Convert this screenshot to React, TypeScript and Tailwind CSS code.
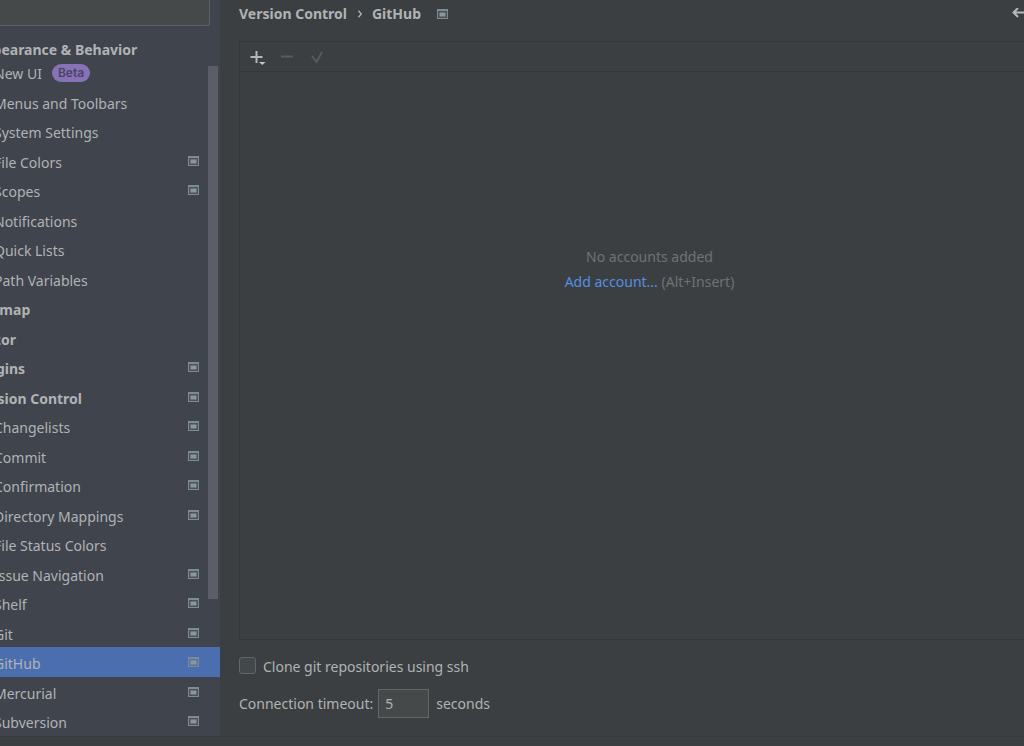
import React from "react";
import clsx from "clsx";

interface SettingsItem {
  label: string;
  level: "group" | "page";
  projectScoped?: boolean;
  badge?: string;
  selected?: boolean;
}

const items: SettingsItem[] = [
  { label: "New UI", level: "page", badge: "Beta" },
  { label: "Menus and Toolbars", level: "page" },
  { label: "System Settings", level: "page" },
  { label: "File Colors", level: "page", projectScoped: true },
  { label: "Scopes", level: "page", projectScoped: true },
  { label: "Notifications", level: "page" },
  { label: "Quick Lists", level: "page" },
  { label: "Path Variables", level: "page" },
  { label: "Keymap", level: "group" },
  { label: "Editor", level: "group" },
  { label: "Plugins", level: "group", projectScoped: true },
  { label: "Version Control", level: "group", projectScoped: true },
  { label: "Changelists", level: "page", projectScoped: true },
  { label: "Commit", level: "page", projectScoped: true },
  { label: "Confirmation", level: "page", projectScoped: true },
  { label: "Directory Mappings", level: "page", projectScoped: true },
  { label: "File Status Colors", level: "page" },
  { label: "Issue Navigation", level: "page", projectScoped: true },
  { label: "Shelf", level: "page", projectScoped: true },
  { label: "Git", level: "page", projectScoped: true },
  { label: "GitHub", level: "page", projectScoped: true, selected: true },
  { label: "Mercurial", level: "page", projectScoped: true },
  { label: "Subversion", level: "page", projectScoped: true },
];

const ProjectIcon: React.FC<{ className?: string }> = ({ className = "" }) => (
  <svg
    viewBox="0 0 11 10"
    className={clsx("h-[10px] w-[11px] shrink-0", className)}
    aria-hidden="true"
  >
    <path fillRule="evenodd" d="M0 0h11v10H0z M1 2v7h9V2z" fill="#7f8b93" />
    <rect x="1" y="2" width="9" height="7" fill="#7f8b93" fillOpacity="0.2" />
    <rect x="2.500" y="3.500" width="6" height="4" fill="#8b979f" />
  </svg>
);

const Sidebar: React.FC = () => (
  <aside className="relative flex w-[220px] shrink-0 flex-col overflow-hidden bg-[#40444c]">
    <input
      type="search"
      aria-label="Search settings"
      className="-ml-6 mr-[10px] h-[26px] rounded-b-[3px] border border-t-0 border-[#5c6062] bg-[#45494a] px-2 outline-none"
    />
    <nav className="pt-[15px]">
      <button
        type="button"
        className="-ml-[26px] flex h-4 items-center whitespace-nowrap font-bold leading-5"
      >
        <span className="pt-[2px]">Appearance &amp; Behavior</span>
      </button>
      <ul>
        {items.map((item) => (
          <li key={item.label} className="h-[29px] odd:h-[30px]">
            <button
              type="button"
              aria-current={item.selected ? "page" : undefined}
              className={clsx(
                "flex h-full w-full items-center pr-[21px] text-left",
                item.selected && "bg-[#4b6eaf]",
              )}
            >
              <span
                className={clsx(
                  "whitespace-nowrap pt-1 leading-5",
                  item.level === "group" ? "-ml-[26px] font-bold" : "-ml-[6px]",
                )}
              >
                {item.label}
              </span>
              {item.badge && (
                <span className="ml-[10px] mt-[2px] rounded-full bg-[#8672b5] px-[6px] font-['Inter','Liberation_Sans',sans-serif] text-xs font-semibold leading-[18px] text-[#4b4268]">
                  {item.badge}
                </span>
              )}
              {item.projectScoped && <ProjectIcon className="ml-auto" />}
            </button>
          </li>
        ))}
      </ul>
    </nav>
    <div className="absolute right-[2px] top-[66px] h-[533px] w-[10px] bg-[#5b5e66]" />
  </aside>
);

const Breadcrumb: React.FC = () => (
  <header className="flex h-7 items-center justify-between">
    <div className="flex items-center font-bold leading-5">
      <a href="#version-control">Version Control</a>
      <svg viewBox="0 0 6 8" className="ml-[10px] mr-[9px] h-2 w-[6px]" aria-hidden="true">
        <path d="M1.500 .8 4.300 4 1.500 7.200" fill="none" stroke="currentColor" strokeWidth="1.3" />
      </svg>
      <span>GitHub</span>
      <ProjectIcon className="ml-4" />
    </div>
    <button type="button" aria-label="Back" className="-mr-1">
      <svg viewBox="0 0 16 12" className="h-3 w-4" aria-hidden="true">
        <path
          d="M6 0 1.500 4.500 6 9M1.500 4.500H16"
          fill="none"
          stroke="#b4b7b9"
          strokeWidth="2"
        />
      </svg>
    </button>
  </header>
);

const Toolbar: React.FC = () => (
  <div className="flex h-[30px] items-center gap-[14px] border-b border-[#343638] pl-[9px]">
    <button type="button" aria-label="Add account">
      <svg viewBox="0 0 17 16" className="h-4 w-[17px]" aria-hidden="true">
        <path d="M7.500 2v12M1.500 8h12" stroke="#b4b7b9" strokeWidth="2" />
        <path d="M10 13h6.500l-3.250 3z" fill="#c4c6c8" />
      </svg>
    </button>
    <button type="button" aria-label="Remove account" disabled>
      <svg viewBox="0 0 14 14" className="h-[14px] w-[14px]" aria-hidden="true">
        <path d="M1 6.500h12" stroke="#595c5e" strokeWidth="2" />
      </svg>
    </button>
    <button type="button" aria-label="Set as default" disabled>
      <svg viewBox="0 0 16 14" className="h-[14px] w-4" aria-hidden="true">
        <path d="M4 6l4.500 6 5.500-10" fill="none" stroke="#595c5e" strokeWidth="1.8" />
      </svg>
    </button>
  </div>
);

// The panel runs on past the right edge of the window.
const AccountsPanel: React.FC = () => (
  <section className="-mr-9 mt-[13px] flex flex-1 flex-col border border-[#343638]">
    <Toolbar />
    <div className="flex flex-1 flex-col items-center pt-[172px] leading-[25px] text-[#6f7274]">
      <p>No accounts added</p>
      <p>
        <a href="#add-account" className="text-[#548fe0]">
          Add account...
        </a>{" "}
        (Alt+Insert)
      </p>
    </div>
  </section>
);

const ConnectionOptions: React.FC = () => (
  <form className="flex flex-col items-start pb-[18px] pt-[17px]">
    <label className="flex items-center gap-[7px] leading-5">
      <input
        type="checkbox"
        className="-mt-1 size-[17px] appearance-none rounded-[3px] border border-[#636668] bg-[#43484a] checked:bg-[#4b6eaf]"
      />
      Clone git repositories using ssh
    </label>
    <div className="mt-3 flex items-center leading-5">
      <label htmlFor="timeout">Connection timeout:</label>
      <input
        id="timeout"
        type="text"
        defaultValue="5"
        className="ml-[5px] mr-[7px] h-[29px] w-[51px] border border-[#646668] bg-[#45494a] px-[6px] outline-none"
      />
      <span>seconds</span>
    </div>
  </form>
);

export default function App() {
  return (
    <div className="flex min-h-screen flex-col overflow-hidden bg-[#3c3f41] font-['Noto_Sans','Open_Sans',sans-serif] text-sm text-[#b0b3b5]">
      <div className="flex flex-1">
        <Sidebar />
        <main className="flex min-w-0 flex-1 flex-col pl-[19px]">
          <Breadcrumb />
          <AccountsPanel />
          <ConnectionOptions />
        </main>
      </div>
      <footer className="h-[10px] border-t border-[#37393b]" />
    </div>
  );
}
